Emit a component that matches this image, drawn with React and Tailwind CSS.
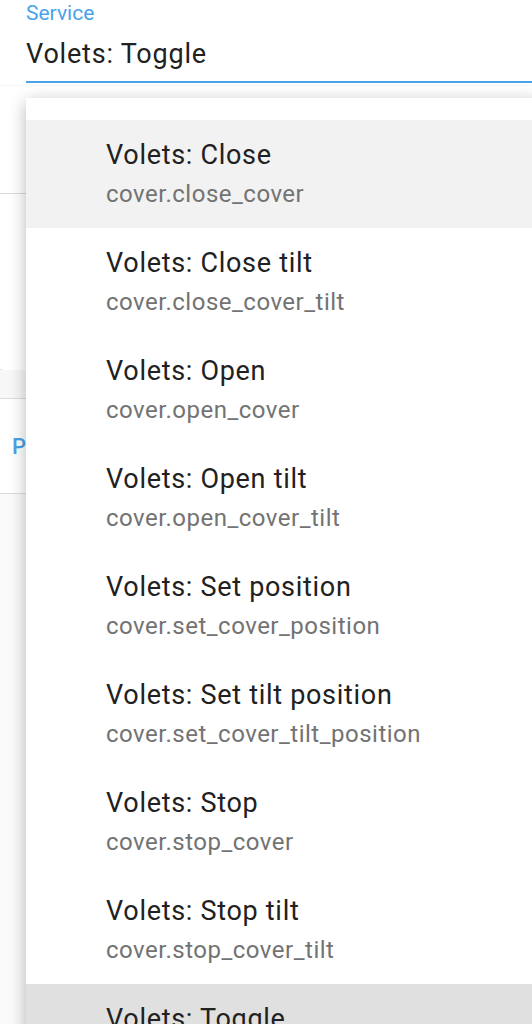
import React from "react";

const services = [
  { name: "Volets: Close", id: "cover.close_cover" },
  { name: "Volets: Close tilt", id: "cover.close_cover_tilt" },
  { name: "Volets: Open", id: "cover.open_cover" },
  { name: "Volets: Open tilt", id: "cover.open_cover_tilt" },
  { name: "Volets: Set position", id: "cover.set_cover_position" },
  { name: "Volets: Set tilt position", id: "cover.set_cover_tilt_position" },
  { name: "Volets: Stop", id: "cover.stop_cover" },
  { name: "Volets: Stop tilt", id: "cover.stop_cover_tilt" },
  { name: "Volets: Toggle", id: "cover.toggle" },
];

export default function App() {
  const focused = 0;
  const selected = 8;

  return (
    <div
      className="relative w-[532px] h-[1024px] overflow-hidden bg-white"
      style={{ fontFamily: "Roboto, 'Noto Sans', sans-serif" }}
    >
      {/* page behind the dropdown */}
      <div className="flex flex-col">
        <div className="pl-[26px]">
          <div className="h-[28px] flex items-center text-[21px] text-[#4aa3e8]">
            Service
          </div>
          <div className="h-[53px] flex items-center text-[27px] tracking-[0.8px] text-[#212121]">
            Volets: Toggle
          </div>
          <div className="h-[2px] bg-[#4aa3e8]" />
        </div>
        <div className="ml-[-4px] mt-[3px] bg-white rounded-bl-lg shadow-[0_1px_3px_rgba(0,0,0,0.25)] flex flex-col">
          <div className="h-[107px]" />
          <div className="h-[1px] bg-[#dcdcdc]" />
          <div className="h-[176px]" />
        </div>
        <div className="h-[29px] bg-[#f7f7f7] border-b border-[#dcdcdc]" />
        <div className="h-[95px] flex items-center pl-[12px] text-[22px] font-medium text-[#4aa3e8] border-b border-[#dcdcdc]">
          P
        </div>
        <div className="h-[540px] bg-[#fafafa]" />
      </div>

      {/* dropdown menu */}
      <div className="absolute left-[26px] top-[98px] right-[-10px] h-[1100px] bg-white pt-[22px] shadow-[0_4px_16px_rgba(0,0,0,0.28)]">
        {services.map((s, i) => (
          <div
            key={s.id}
            className={`h-[108px] pl-[80px] flex flex-col pt-[19px] ${
              i === focused ? "bg-[#f2f2f2]" : i === selected ? "bg-[#e0e0e0]" : "bg-white"
            }`}
          >
            <div className="text-[27px] leading-[32px] tracking-[0.7px] text-[#212121]">{s.name}</div>
            <div className="mt-[9px] text-[24px] leading-[28px] tracking-[0.5px] text-[#737373]">{s.id}</div>
          </div>
        ))}
      </div>
    </div>
  );
}
